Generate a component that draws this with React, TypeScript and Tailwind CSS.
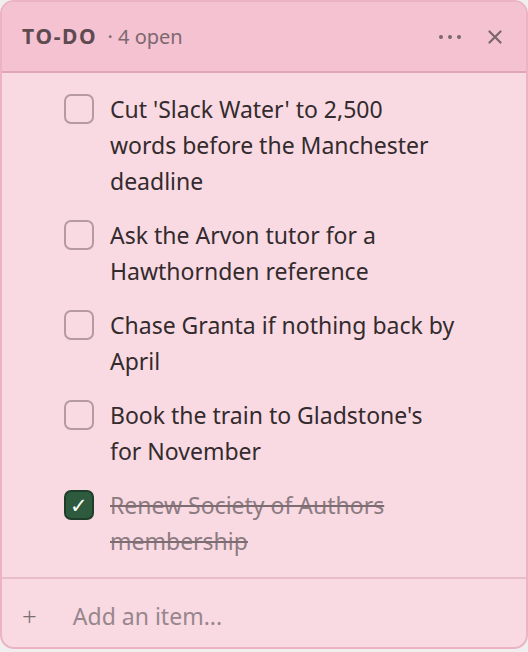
import { Fragment, useState } from "react";

type Todo = {
  id: number;
  lines: string[];
  done: boolean;
};

// lines kept as they wrap in the card
const initialTodos: Todo[] = [
  { id: 1, lines: ["Cut 'Slack Water' to 2,500", "words before the Manchester", "deadline"], done: false },
  { id: 2, lines: ["Ask the Arvon tutor for a", "Hawthornden reference"], done: false },
  { id: 3, lines: ["Chase Granta if nothing back by", "April"], done: false },
  { id: 4, lines: ["Book the train to Gladstone's", "for November"], done: false },
  { id: 5, lines: ["Renew Society of Authors", "membership"], done: true },
];

export default function App() {
  const [todos, setTodos] = useState(initialTodos);
  const openCount = todos.filter((t) => !t.done).length;

  const toggle = (id: number) => {
    setTodos((prev) => prev.map((t) => (t.id === id ? { ...t, done: !t.done } : t)));
  };

  return (
    <div
      className="min-h-screen bg-[#f1eef0]"
      style={{ fontFamily: "'Noto Sans', 'Open Sans', sans-serif" }}
    >
      <article className="flex h-[649px] w-[528px] flex-col overflow-hidden rounded-[14px] border-2 border-[#ebb3c4] bg-[#f9dae3]">
        <header className="flex h-[71px] shrink-0 items-center border-b-2 border-[#dea6b7] bg-[#f4c2d0] pl-5 pr-6">
          <h3 className="text-[21px] font-bold tracking-[0.08em] text-[#5e4a51]">TO-DO</h3>
          <span className="ml-[10px] text-[20px] text-[#7d6870]">· {openCount} open</span>
          <div className="ml-auto flex items-center gap-[26px] text-[#7a666d]">
            <svg width="24" height="6" viewBox="0 0 24 6" fill="currentColor">
              <circle cx="3" cy="3" r="2" />
              <circle cx="12" cy="3" r="2" />
              <circle cx="21" cy="3" r="2" />
            </svg>
            <svg width="14" height="14" viewBox="0 0 14 14" stroke="currentColor" strokeWidth="2.2" strokeLinecap="round">
              <path d="M1.5 1.5 12.5 12.5M12.5 1.5 1.5 12.5" />
            </svg>
          </div>
        </header>

        <ul className="flex flex-1 flex-col gap-[18px] pl-[62px] pr-6 pt-[18px]">
          {todos.map((todo) => (
            <li key={todo.id} className="flex items-start gap-[16px]">
              <button
                type="button"
                onClick={() => toggle(todo.id)}
                className={`mt-[3px] flex h-[30px] w-[30px] shrink-0 items-center justify-center rounded-[7px] border-2 ${
                  todo.done ? "border-[#1e3d2a] bg-[#2e5a3e] text-white" : "border-[#b59aa3] bg-transparent"
                }`}
              >
                {todo.done && <span className="text-[21px] leading-none">✓</span>}
              </button>
              <span
                className={`whitespace-nowrap text-[23px] leading-[36px] ${
                  todo.done ? "text-[#8c7b81] line-through decoration-[#7d6d73]" : "text-[#332b2d]"
                }`}
              >
                {todo.lines.map((line, i) => (
                  <Fragment key={i}>
                    {i > 0 && <br />}
                    {line}
                  </Fragment>
                ))}
              </span>
            </li>
          ))}
        </ul>

        <footer className="flex h-[70px] shrink-0 items-center border-t-2 border-[#e9bccb] pl-5 pt-[6px]">
          <span className="text-[26px] font-light leading-none text-[#7d6d73]">+</span>
          <span className="ml-[36px] text-[23px] text-[#97868c]">Add an item...</span>
        </footer>
      </article>
    </div>
  );
}
